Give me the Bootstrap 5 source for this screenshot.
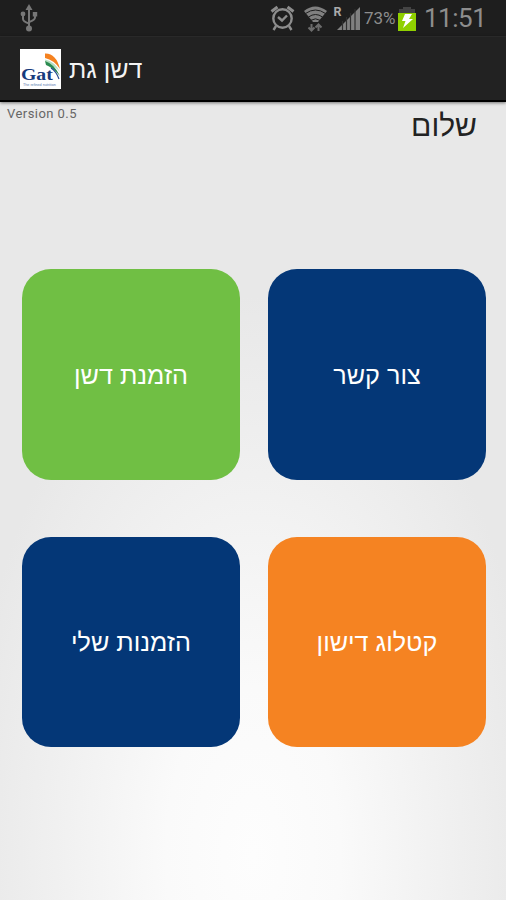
<!DOCTYPE html>
<html lang="he">
<head>
<meta charset="utf-8">
<meta name="viewport" content="width=device-width, initial-scale=1">
<title>דשן גת</title>
<link rel="stylesheet" href="https://cdn.jsdelivr.net/npm/bootstrap@5.3.0/dist/css/bootstrap.min.css">
<style>
html, body { height: 100%; }
body { font-family: "Liberation Sans", sans-serif; overflow: hidden; }
.screen { width: 506px; height: 900px; background: radial-gradient(ellipse 290px 560px at 50% 95%, #fdfdfd 0, #fafafa 30%, #f0f0f0 68%, #e8e8e8 100%) #e8e8e8; }
.status-bar { height: 36px; background: #1e1e1e; color: #8d8d8d; font-family: Roboto, sans-serif; padding: 0 20px 0 20px; }
.status-bar svg { flex: none; display: block; }
.pct { font-size: 17px; line-height: 37px; width: 35px; padding-left: 1px; }
.clock { font-size: 26px; line-height: 36px; width: 62px; letter-spacing: -.5px; }
.title-bar { height: 66px; background: #222; border-top: 1px solid #292929; border-bottom: 2px solid #000; box-shadow: 0 1px 3px rgba(0,0,0,.5); padding-left: 20px; gap: 8px; }
.app-name { color: #f3f3f3; font-size: 25px; line-height: 36px; }
.greeting-row { height: 167px; padding: 3px 29px 0 7px; }
.version { font: 13px/18px Roboto, sans-serif; color: #666; letter-spacing: .45px; }
.greeting { font-size: 30px; line-height: 42px; color: #222; }
.tiles { padding: 0 20px 0 22px; display: grid; grid-template-columns: 218px 218px; grid-auto-rows: 210.5px; gap: 57px 28px; }
.tile { border: 0; border-radius: 29px; color: #fff; font-size: 25.2px; line-height: 36px; padding-top: 2px; }
.tile-green { background: #70bf44; }
.tile-blue { background: #043777; }
.tile-orange { background: #f58322; }
</style>
<script src="https://cdn.jsdelivr.net/npm/bootstrap@5.3.0/dist/js/bootstrap.bundle.min.js"></script>
</head>
<body>
<div class="screen">
  <div class="status-bar d-flex align-items-center">
    <svg width="18" height="28" viewBox="0 0 18 28" fill="none" stroke="#777" stroke-width="2"><path d="M9 3v21M3 10v5q0 2.500 6 4.500M15 9v4.500q0 2.500-6 4.500"/><g fill="#777" stroke="none"><circle cx="9" cy="24.500" r="3"/><path d="M9 0l3.500 6h-7z"/><circle cx="3" cy="10" r="2.400"/><path d="M12.800 8h4.400v4.400h-4.400z"/></g></svg>
    <svg class="ms-auto" width="25" height="26" viewBox="0 0 25 26" fill="none" stroke="#8d8d8d" stroke-width="2.400"><circle cx="12.500" cy="13.500" r="9.200"/><path d="M8 12l4 3.500 5-5M6 21l-2.500 4M19 21l2.500 4"/><path d="M1.500 6.500l6-4.500M23.500 6.500l-6-4.500" stroke-width="3"/></svg>
    <svg class="ms-2" width="26" height="28" viewBox="0 0 26 28"><path d="M1 7q11-9 23 0L15 18h-5z" fill="#808080"/><path d="M2.500 9.500q10-7 20 0M5.500 13q7-5 14 0M8 16.300q4.500-3 9 0" fill="none" stroke="#1e1e1e" stroke-width="1"/><path d="M8.500 20v6M5.500 23.500l3 3 3-3M15.500 27v-6M12.500 23.500l3-3 3 3" fill="none" stroke="#6c6c6c" stroke-width="2"/></svg>
    <svg class="ms-1" width="30" height="28" viewBox="0 0 30 28"><text x=".5" y="12" font-size="12.500" font-weight="bold" fill="#aaa">R</text><path d="M4 26L27 3v23z" fill="#808080"/><path d="M9.500 17v9M13.500 13v13M17.500 9v17M22 5v21" stroke="#303030" stroke-width="1.200"/></svg>
    <span class="pct">73%</span>
    <svg class="me-2" width="18" height="25" viewBox="0 0 18 25"><path d="M5 1h8v2h4v5H1V3h4z" fill="#444"/><path d="M0 7h18v18H0z" fill="#90d000"/><path d="M7 8h7l-3 5h4L5 22l2.500-7H4z" fill="#fff"/></svg>
    <span class="clock">11:51</span>
  </div>
  <div class="title-bar d-flex align-items-center position-relative">
    <svg width="41" height="40" viewBox="0 0 41 40"><path d="M0 0h41v40H0z" fill="#fff"/><path d="M25 4.500Q36 4 40 20Q34 11 25 9z" fill="#f58220"/><path d="M25 10.500Q35 12.500 40 23Q33 15.500 25.500 13z" fill="#b5dfc0"/><path d="M25 12Q34 14.500 40 27Q32 18 26 16z" fill="#2b8b50"/><path d="M31 19Q36 22 39 30" fill="none" stroke="#254c91" stroke-width="1.200"/><text transform="translate(1 31) scale(1.13 1)" font-family="Liberation Serif" font-weight="bold" font-size="17.500" fill="#173b7c">Gat</text><text x="3" y="36.500" font-family="Liberation Sans" font-size="3.700" fill="#5877ac">The refined nutrition</text></svg>
    <span class="app-name" dir="rtl">דשן גת</span>
  </div>
  <div class="greeting-row d-flex justify-content-between align-items-start">
    <span class="version">Version 0.5</span><span class="greeting" dir="rtl">שלום</span>
  </div>
  <div class="tiles">
    <button class="tile tile-green" dir="rtl">הזמנת דשן</button>
    <button class="tile tile-blue" dir="rtl">צור קשר</button>
    <button class="tile tile-blue" dir="rtl">הזמנות שלי</button>
    <button class="tile tile-orange" dir="rtl">קטלוג דישון</button>
  </div>
</div>
</body>
</html>
